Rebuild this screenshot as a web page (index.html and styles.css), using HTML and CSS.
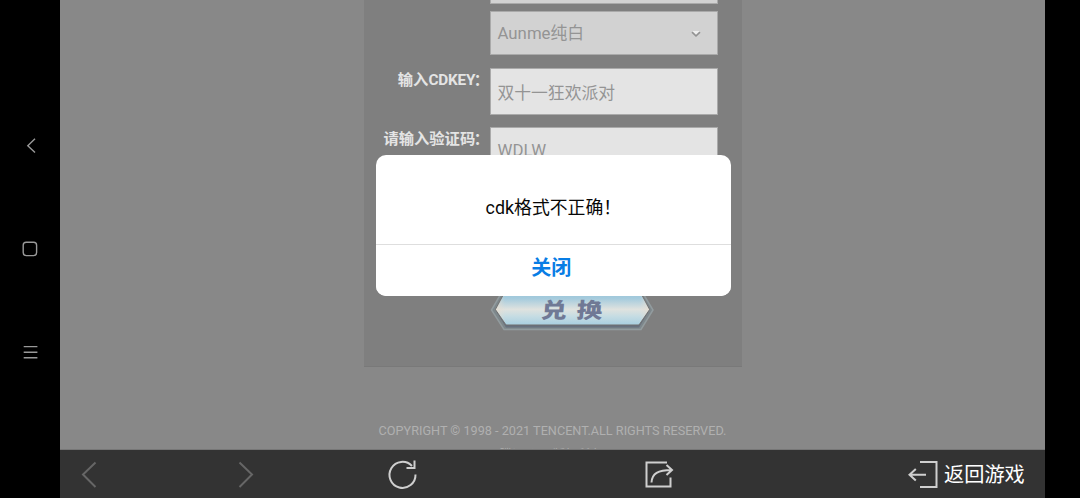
FILE: index.html
```html
<!DOCTYPE html>
<html lang="zh-CN">
<head>
<meta charset="utf-8">
<title>CDKEY</title>
<link rel="stylesheet" href="styles.css">
</head>
<body>
<div class="screen">
  <nav class="rail">
    <svg width="20" height="20" viewBox="0 0 20 20"><path d="M15 2.800 7.800 9.700 15 16.500"/></svg>
    <svg width="20" height="20" viewBox="0 0 20 20"><rect x="3.200" y="3.200" width="13.400" height="13.400" rx="3"/></svg>
    <svg width="20" height="20" viewBox="0 0 20 20"><path d="M3.700 4.600h13.700M3.700 10.300h13.700M3.700 15.800h13.700"/></svg>
  </nav>
  <main class="main">
    <section class="page">
      <form class="panel">
        <div class="field stub"></div>
        <div class="field select"><span>Aunme纯白</span>
          <svg width="12" height="8" viewBox="0 0 12 8"><path class="glow" d="M2 1h8L6 4.500z"/><path class="arrow" d="M2 2.200 6 6 10 2.200"/></svg>
        </div>
        <label class="label cdkey">输入<span class="latin">CDKEY</span><span class="colon">：</span></label>
        <div class="field input"><span>双十一狂欢派对</span></div>
        <label class="label verify">请输入验证码<span class="colon">：</span></label>
        <div class="field code"><span>WDLW</span></div>
        <svg class="redeem" width="168" height="54" viewBox="0 0 168 54">
          <defs>
            <linearGradient id="face" x1="0" y1="0" x2="0" y2="1">
              <stop offset="0" stop-color="#91bfd5"/><stop offset=".32" stop-color="#a5cbdd"/><stop offset=".6" stop-color="#dfe2df"/><stop offset=".78" stop-color="#c5dce3"/><stop offset="1" stop-color="#a8cfe0"/>
            </linearGradient>
            <linearGradient id="edge" x1="0" y1="0" x2="1" y2="0">
              <stop offset="0" stop-color="#e6ddd0" stop-opacity=".7"/><stop offset=".06" stop-color="#e6ddd0" stop-opacity="0"/><stop offset=".94" stop-color="#e6ddd0" stop-opacity="0"/><stop offset="1" stop-color="#e6ddd0" stop-opacity=".7"/>
            </linearGradient>
          </defs>
          <path d="M3.500 29 18 4H150L165 29 153 48.500H16z" fill="#7d878b" stroke="#929b9e" stroke-width="1.500"/>
          <path d="M8 30 18 46.500H151L161 30z" fill="#67717f"/>
          <path d="M7.500 28.500 20 5H149L161.500 28.500 151 44H18z" fill="url(#face)" stroke="#716f6e" stroke-width="1"/>
          <path d="M8 28.500 20 5H149L161 28.500 151 43.500H18z" fill="url(#edge)"/>
          <g class="redeem-text"><text transform="translate(52.500 36.500) skewX(-5) scale(1.2 1)">兑</text><text transform="translate(88 36.500) skewX(-5) scale(1.2 1)">换</text></g>
        </svg>
      </form>
      <footer class="legal"><p>COPYRIGHT © 1998 - 2021 TENCENT.ALL RIGHTS RESERVED.</p><p class="owner">腾讯公司 版权所有</p></footer>
    </section>
    <nav class="toolbar">
      <svg class="dim" width="36" height="36" viewBox="0 0 36 36"><path d="M24.500 5.500 12 17.500 24.500 30"/></svg>
      <svg class="dim" width="36" height="36" viewBox="0 0 36 36"><path d="M11.500 5.500 24 17.500 11.500 30"/></svg>
      <svg width="36" height="36" viewBox="0 0 36 36"><path d="M30.500 17.500A13 13 0 1 1 27 9M29.500 3.500V11H21.500"/></svg>
      <svg width="36" height="36" viewBox="0 0 36 36"><path d="M26 5.500H5.500V29.500H29.500V20.500M10.500 25.500C11 16.500 17 13 30.500 13M25.500 8l5.500 5-5.500 5"/></svg>
      <div class="return"><svg width="30" height="36" viewBox="0 0 30 36"><path d="M12 5H28.500V30H12M18 17.700H2M7.800 12 1.500 17.700l6.300 5.800"/></svg><span>返回游戏</span></div>
    </nav>
    <div class="dialog" role="dialog"><div class="message">cdk格式不正确！</div><button class="close">关闭</button></div>
  </main>
</div>
</body>
</html>
```
FILE: styles.css
```css
* { box-sizing: border-box; }
body { margin: 0; background: #000; font-family: Roboto, "Noto Sans CJK SC", sans-serif; }
svg { display: block; flex: none; }
p { margin: 0; }
.screen { display: flex; width: 1080px; height: 498px; overflow: hidden; }
.rail { width: 60px; padding: 136px 0 0 20px; display: flex; flex-direction: column; gap: 83px; }
.rail svg { fill: none; stroke: #999; stroke-width: 1.4; }
.main { position: relative; width: 985px; display: flex; flex-direction: column; }
.page { height: 449.500px; background: #888; overflow: hidden; border-bottom: 1px solid #777; }
.panel {
  width: 378px; height: 366.500px; margin-left: 304px; padding-right: 24px; background: #7f7f7f;
  display: grid; grid-template-columns: 119px 228px; grid-template-rows: 4px 44px 47px 90px 54px;
  column-gap: 7px; align-content: start; border-bottom: 1px solid #797979;
}
.field { grid-column: 2; border: 1px solid #aaa; color: #949494; font-size: 16.800px; line-height: 24px; padding-left: 6.500px; }
.stub { border-top: 0; background: #d2d2d2; }
.select { margin-top: 7px; margin-bottom: -7px; height: 44px; background: #d2d2d2; display: flex; justify-content: space-between; padding: 9px 15px 0 6.500px; }
.select svg { margin-top: 9px; fill: none; stroke: #929292; stroke-width: 1.6; }
.select .glow { fill: #eee; stroke: none; }
.input { margin-top: 20px; height: 47px; background: #e4e4e4; padding-top: 12px; }
.code { margin-top: 32px; height: 47px; background: #e4e4e4; padding-top: 10px; }
.label { grid-column: 1; margin-right: -6px; color: #e4e4e4; font-size: 15.300px; font-weight: 700; line-height: 22px; text-align: right; white-space: nowrap; }
.label .latin { letter-spacing: -.2px; }
.label .colon { margin-left: -1.500px; }
.cdkey { margin-top: 21px; }
.verify { margin-top: 33px; }
.redeem { grid-column: 2; margin: 96px 0 0 -2px; }
.redeem-text { font: 900 21.500px "Noto Sans CJK SC", sans-serif; fill: #707995; }
.legal { padding-top: 54.500px; text-align: center; font-size: 12.680px; line-height: 20px; color: #b0b0b0; }
.legal .owner { padding-right: 3px; font-size: 12.500px; line-height: 27px; }
.toolbar { height: 48.500px; background: #333; padding: 7px 0 0 11px; display: grid; grid-template-columns: 157px 157px 256px 267px auto; }
.toolbar svg { fill: none; stroke: #cfcfcf; stroke-width: 2; }
.toolbar .dim { stroke: #666; }
.return { height: 36px; display: flex; align-items: center; gap: 6px; color: #fff; font-size: 20.200px; line-height: 36px; white-space: nowrap; }
.dialog { position: absolute; left: 315.600px; top: 155.300px; width: 355.400px; height: 140.400px; background: #fff; border-radius: 10px; overflow: hidden; }
.message { height: 90px; padding: 41px 0 0 110px; border-bottom: 1px solid #dedede; color: #080808; font-size: 17.850px; line-height: 24px; }
.close { display: block; width: 100%; height: 51px; padding: 0 4px 9px 0; border: 0; background: #fff; color: #087de5; font: 700 20px "Noto Sans CJK SC", sans-serif; }
```
